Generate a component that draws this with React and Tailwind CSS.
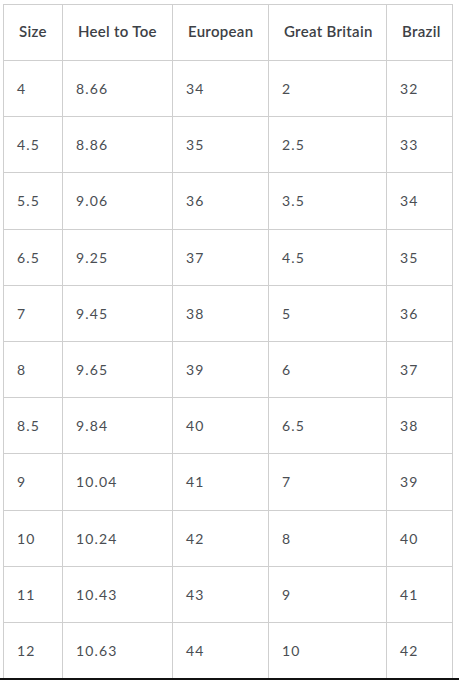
import React from "react";

const rows = [
  ["4", "8.66", "34", "2", "32"],
  ["4.5", "8.86", "35", "2.5", "33"],
  ["5.5", "9.06", "36", "3.5", "34"],
  ["6.5", "9.25", "37", "4.5", "35"],
  ["7", "9.45", "38", "5", "36"],
  ["8", "9.65", "39", "6", "37"],
  ["8.5", "9.84", "40", "6.5", "38"],
  ["9", "10.04", "41", "7", "39"],
  ["10", "10.24", "42", "8", "40"],
  ["11", "10.43", "43", "9", "41"],
  ["12", "10.63", "44", "10", "42"],
];

const heads = ["Size", "Heel to Toe", "European", "Great Britain", "Brazil"];
const widths = ["w-[59px]", "w-[110px]", "w-[96px]", "w-[118px]", "w-[66px]"];

export default function App() {
  return (
    <div className="relative w-[459px] h-[680px] bg-white overflow-hidden" style={{ fontFamily: "Lato, 'Open Sans', sans-serif" }}>
      <div className="pl-[3px] pt-[4px]">
        <table className="border-collapse table-fixed w-[449px]">
          <thead>
            <tr>
              {heads.map((h, i) => (
                <th
                  key={h}
                  className={`${widths[i]} h-[56px] border border-[#cfcfcf] text-left font-semibold text-[15px] text-[#3d4146] pl-[15px] pr-0 pb-[3px] tracking-[0.02em]`}
                >
                  {h}
                </th>
              ))}
            </tr>
          </thead>
          <tbody>
            {rows.map((r, ri) => (
              <tr key={ri}>
                {r.map((c, ci) => (
                  <td
                    key={ci}
                    className="h-[56.2px] border border-[#cfcfcf] text-left text-[14px] text-[#4a4e53] pl-[13px] tracking-[0.08em]"
                  >
                    {c}
                  </td>
                ))}
              </tr>
            ))}
          </tbody>
        </table>
      </div>
      <div className="absolute left-0 right-0 bottom-0 h-[2px] bg-[#111]" />
    </div>
  );
}
